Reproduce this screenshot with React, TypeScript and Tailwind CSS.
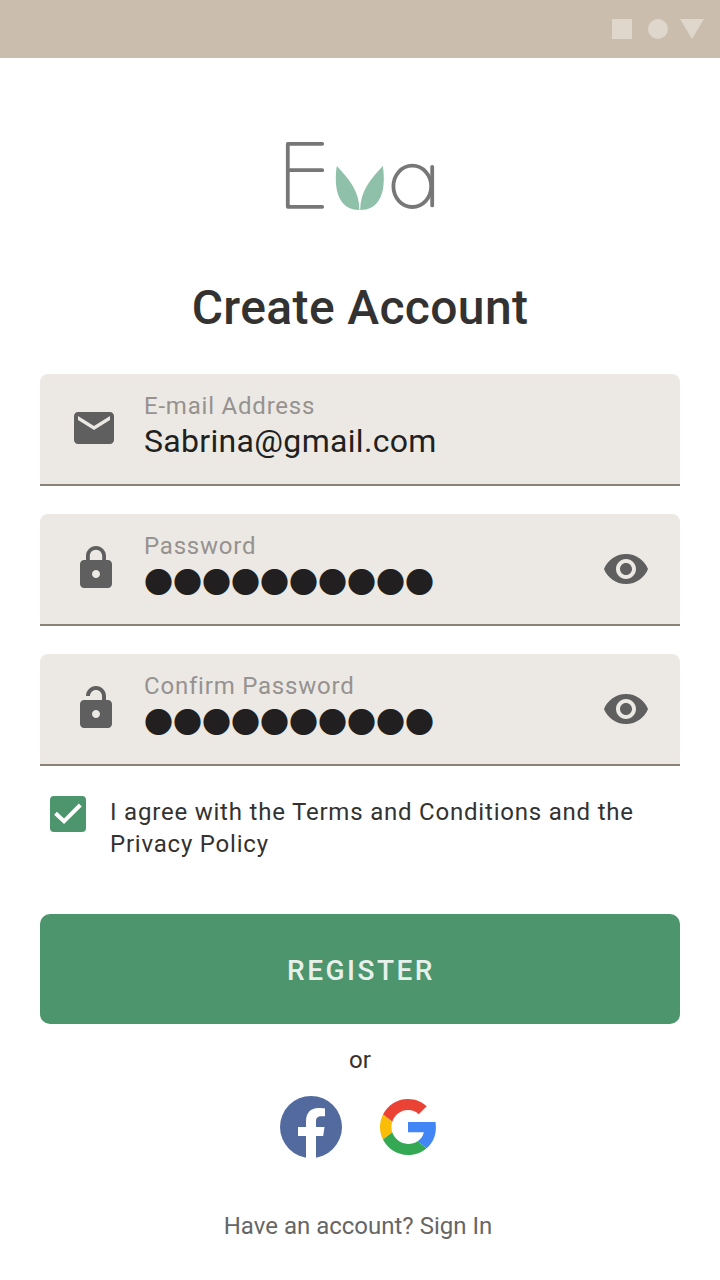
import { useId, useState } from 'react';
import type { ReactNode } from 'react';
import { MdEmail, MdLock, MdVisibility } from 'react-icons/md';

function StatusBar() {
  return (
    <header className="flex h-[58px] items-center justify-end bg-[#cbbdad] px-4 text-[#dfd6cc]">
      <svg width="92" height="20" viewBox="0 0 92 20" fill="currentColor" aria-hidden="true">
        <rect width="20" height="20" />
        <circle cx="46" cy="10" r="10" />
        <path d="M68 0H92L80 20Z" />
      </svg>
    </header>
  );
}

function Logo() {
  return (
    <svg className="h-[70px] w-[150px]" viewBox="285 141 150 70" role="img" aria-label="Eva">
      <g fill="none" stroke="#777777" strokeWidth="3.8" strokeLinecap="round" strokeLinejoin="round">
        <path d="M322.2 143.8H287.8V206.8H322.2M287.8 170.2H322.2" />
        <ellipse cx="412.3" cy="186.300" rx="18.900" ry="20.700" />
        <path d="M432.2 166.800V205.400" />
      </g>
      <g fill="#8fc0a9">
        <path d="M336.800 166C350 180 359.400 192 359.400 210C343 210 335.800 197 335.800 179C335.800 173 336.300 169.500 336.800 166Z" />
        <path d="M382.800 166C369.600 180 360.200 192 360.200 210C376.600 210 383.800 197 383.800 179C383.800 173 383.300 169.500 382.800 166Z" />
      </g>
    </svg>
  );
}

function UnlockedIcon() {
  return (
    <svg width="48" height="48" viewBox="0 0 24 24" fill="currentColor" aria-hidden="true">
      <path d="M18 8h-1V6c0-2.760-2.240-5-5-5S7 3.240 7 6h2c0-1.660 1.340-3 3-3s3 1.340 3 3v2H6c-1.100 0-2 .9-2 2v10c0 1.100.9 2 2 2h12c1.100 0 2-.9 2-2V10c0-1.100-.9-2-2-2zm-6 9c-1.100 0-2-.9-2-2s.9-2 2-2 2 .9 2 2-.9 2-2 2z" />
    </svg>
  );
}

type FieldProps = { label: string; icon: ReactNode; children: (id: string) => ReactNode; action?: ReactNode };

function Field({ label, icon, children, action }: FieldProps) {
  const id = useId();
  return (
    <div className="flex h-28 items-center rounded-t-lg border-b-2 border-[#8a8177] bg-[#ece9e4] pr-[30px] pl-8 text-[#5f5f5f]">
      <div className="flex w-[72px] shrink-0 pb-0.5">{icon}</div>
      <div className="flex min-w-0 flex-1 flex-col pb-1">
        <label htmlFor={id} className="text-2xl leading-7 tracking-[0.033em] text-[#969290]">
          {label}
        </label>
        {children(id)}
      </div>
      {action}
    </div>
  );
}

function PasswordField({ label, icon }: { label: string; icon: ReactNode }) {
  const [password, setPassword] = useState('evergreen1');
  const [visible, setVisible] = useState(false);
  return (
    <Field
      label={label}
      icon={icon}
      action={
        <button
          type="button"
          aria-label={visible ? 'Hide password' : 'Show password'}
          aria-pressed={visible}
          onClick={() => setVisible(!visible)}
        >
          <MdVisibility size={48} aria-hidden="true" />
        </button>
      }
    >
      {(id) =>
        visible ? (
          <input
            id={id}
            type="text"
            value={password}
            onChange={(event) => setPassword(event.target.value)}
            className="h-[42px] w-full bg-transparent text-[32px] tracking-[0.01em] text-[#211f20] outline-none"
          />
        ) : (
          <input
            id={id}
            type="text"
            readOnly
            value={'●'.repeat(password.length)}
            className="h-[42px] w-full bg-transparent font-['Noto_Sans_CJK_JP',sans-serif] text-[29px] text-[#211f20] outline-none"
          />
        )
      }
    </Field>
  );
}

function FacebookIcon() {
  return (
    <svg width="62" height="62" viewBox="0 0 62 62" aria-hidden="true">
      <circle cx="31" cy="31" r="31" fill="#526a9d" />
      <path
        d="M26 62V40H18V31H26V25.500C26 17 30.500 12 38.500 12C41 12 43.500 12.200 45 12.500V20.300H41C37.500 20.300 36 22.500 36 25V31H44.500L43.200 40H36V62Z"
        fill="#fff"
      />
    </svg>
  );
}

function GoogleIcon() {
  return (
    <svg width="56" height="56" viewBox="0 0 48 48" aria-hidden="true">
      <path fill="#ea4335" d="M24 9.500c3.540 0 6.710 1.220 9.210 3.600l6.850-6.850C35.900 2.380 30.470 0 24 0 14.620 0 6.510 5.380 2.560 13.220l7.980 6.190C12.430 13.720 17.740 9.500 24 9.500z" />
      <path fill="#4285f4" d="M47.900 24.550c0-1.570-.1-3.200-.35-4.750H24v8.600h13.600c-.7 3.200-2.600 6-5.440 7.800l7.730 6c5-4.180 8.010-10.360 8.010-17.650z" />
      <path fill="#fbbc05" d="M10.530 28.590c-.48-1.450-.76-2.990-.76-4.590s.27-3.140.76-4.590l-7.980-6.190C.92 16.460 0 20.120 0 24c0 3.880.92 7.540 2.560 10.780l7.970-6.190z" />
      <path fill="#34a853" d="M24 48c6.480 0 11.930-2.130 15.890-5.810l-7.730-6c-2.150 1.450-4.920 2.300-8.160 2.300-6.260 0-11.570-4.220-13.470-9.910l-7.980 6.190C6.510 42.620 14.620 48 24 48z" />
    </svg>
  );
}

export default function App() {
  return (
    <div className="min-h-screen bg-white font-['Roboto',sans-serif] text-[#333231]">
      <StatusBar />
      <main className="flex flex-col px-10 pt-[83px]">
        <div className="flex justify-center">
          <Logo />
        </div>
        <h1 className="mt-[69px] text-center text-5xl leading-14 font-medium tracking-[0.0075em]">Create Account</h1>

        <form className="mt-[38px] flex flex-col" onSubmit={(event) => event.preventDefault()}>
          <div className="flex flex-col gap-7">
            <Field label="E-mail Address" icon={<MdEmail size={48} className="-ml-0.5" aria-hidden="true" />}>
              {(id) => (
                <input
                  id={id}
                  type="email"
                  defaultValue="Sabrina@gmail.com"
                  className="h-[42px] w-full bg-transparent text-[32px] tracking-[0.01em] text-[#211f20] outline-none"
                />
              )}
            </Field>
            <PasswordField label="Password" icon={<MdLock size={48} aria-hidden="true" />} />
            <PasswordField label="Confirm Password" icon={<UnlockedIcon />} />
          </div>

          <div className="mt-[30px] flex gap-6 pl-2.5">
            <div className="relative size-9 shrink-0">
              <input
                id="terms"
                type="checkbox"
                defaultChecked
                className="peer block size-9 appearance-none rounded border-2 border-[#4d956d] checked:bg-[#4d956d]"
              />
              <svg
                className="pointer-events-none absolute inset-0 hidden peer-checked:block"
                viewBox="0 0 36 36"
                fill="none"
                stroke="#fff"
                strokeWidth="4"
                aria-hidden="true"
              >
                <path d="M5.500 17.300L14 25.300L30.300 9" />
              </svg>
            </div>
            <label htmlFor="terms" className="text-2xl leading-8 tracking-[0.033em]">
              I agree with the Terms and Conditions and the Privacy Policy
            </label>
          </div>

          <button
            type="submit"
            className="mt-[54px] h-[110px] rounded-[10px] bg-[#4d956d] pt-1 pl-0.5 text-[28px] font-medium tracking-[0.089em] text-[#e8f0ec]"
          >
            REGISTER
          </button>
        </form>

        <p className="mt-5 text-center text-2xl leading-8">or</p>

        <div className="mt-5 flex items-center justify-center gap-[38px] pr-1">
          <button type="button" aria-label="Continue with Facebook">
            <FacebookIcon />
          </button>
          <button type="button" aria-label="Continue with Google">
            <GoogleIcon />
          </button>
        </div>

        <p className="mt-[52px] pr-1 text-center text-2xl leading-8 text-[#666666]">
          Have an account? <a href="#sign-in">Sign In</a>
        </p>
      </main>
    </div>
  );
}
